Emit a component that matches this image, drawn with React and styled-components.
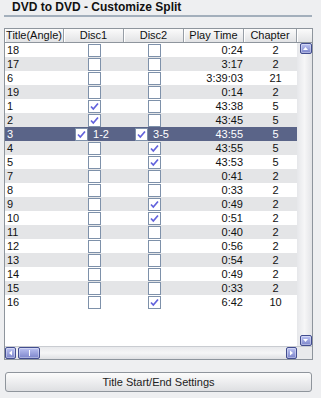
import React from 'react';
import styled, { createGlobalStyle } from 'styled-components';

const GlobalStyle = createGlobalStyle`
  body {
    margin: 0;
    background: #eeeff1;
    font-family: "Liberation Sans", Arial, sans-serif;
  }
`;

const Page = styled.div`
  width: 321px;
  height: 398px;
  background: #eeeff1;
  overflow: hidden;
`;

const Title = styled.div`
  margin: 0 9px 0 4px;
  padding-left: 8px;
  height: 15px;
  line-height: 15px;
  font-size: 12px;
  font-weight: bold;
  color: #111;
  border-bottom: 2px solid #a3afbc;
`;

const ListBox = styled.div`
  margin: 11px 0 0 4px;
  width: 307px;
  height: 330px;
  border: 1px solid #8e959d;
  display: grid;
  grid-template-columns: 292px 15px;
  grid-template-rows: 14px 303px 13px;
  background: #fff;
`;

const HeaderRow = styled.div`
  grid-column: 1 / 3;
  display: grid;
  grid-template-columns: 59px 60px 60px 60px 53px 15px;
  background: linear-gradient(#fbfbfb, #e2e3e5);
  border-bottom: 1px solid #8e959d;
`;

const HeaderCell = styled.div`
  font-size: 11px;
  line-height: 13px;
  color: #111;
  text-align: center;
  border-right: ${(p) => (p.$last ? 'none' : '1px solid #979ea6')};
  box-shadow: inset 1px 0 0 #ffffff;
  white-space: nowrap;
  overflow: hidden;
`;

const Body = styled.div`
  background: #fff;
  overflow: hidden;
`;

const Row = styled.div`
  display: grid;
  grid-template-columns: 59px 60px 60px 60px 53px;
  height: 14px;
  font-size: 11px;
  line-height: 14px;
  background: ${(p) => (p.$selected ? '#5a6488' : p.$odd ? '#e4e5e7' : '#ffffff')};
  color: ${(p) => (p.$selected ? '#ffffff' : '#111111')};
`;

const Cell = styled.div`
  display: flex;
  align-items: center;
  justify-content: ${(p) => p.$justify || 'flex-start'};
  padding: ${(p) => p.$pad || '0'};
  gap: 5px;
  white-space: nowrap;
`;

const Box = styled.span`
  width: 11px;
  height: 11px;
  border: 1px solid #7e91aa;
  background: #fff;
  display: inline-flex;
  align-items: center;
  justify-content: center;
  flex-shrink: 0;
`;

const VScroll = styled.div`
  display: flex;
  flex-direction: column;
  justify-content: space-between;
  align-items: center;
  background: linear-gradient(90deg, #e6e7ea, #f6f6f7 50%, #e3e4e7);
  padding: 0 0 0 1px;
`;

const HScroll = styled.div`
  display: flex;
  align-items: center;
  background: linear-gradient(#e8e9ec, #f6f6f7 50%, #dfe0e3);
  border-top: 1px solid #c9ccd1;
`;

const Corner = styled.div`
  background: #e9eaec;
  border-top: 1px solid #c9ccd1;
`;

const ScrollButton = styled.div`
  width: ${(p) => p.$w || 10}px;
  height: ${(p) => p.$h || 10}px;
  border: 1px solid #424d8f;
  border-radius: 2px;
  background: linear-gradient(#bcc3f2, #7c85cb);
  box-shadow: inset 0 0 0 1px rgba(255, 255, 255, 0.35);
  display: flex;
  align-items: center;
  justify-content: center;
  margin: ${(p) => p.$m || '0'};
  flex-shrink: 0;
`;

const Spacer = styled.div`
  flex: 1;
`;

const Footer = styled.button`
  display: block;
  margin: 12px 0 0 5px;
  width: 307px;
  height: 20px;
  border: 1px solid #8f959c;
  border-radius: 3px;
  background: linear-gradient(#fcfcfc, #dedfe2);
  font-family: "Liberation Sans", Arial, sans-serif;
  font-size: 11px;
  color: #222;
  padding: 0;
`;

const Check = () => (
  <svg width="9" height="9" viewBox="0 0 9 9">
    <path d="M1 4.5 L3.3 7 L8 1.5" fill="none" stroke="#6262dc" strokeWidth="1.7" />
  </svg>
);

const CheckBox = ({ checked }) => <Box>{checked && <Check />}</Box>;

const Arrow = ({ dir }) => {
  const paths = {
    up: 'M1 4 L3.5 1 L6 4 Z',
    down: 'M1 1 L3.5 4 L6 1 Z',
    left: 'M4 0.5 L1 3 L4 5.5 Z',
    right: 'M1 0.5 L4 3 L1 5.5 Z',
  };
  const vertical = dir === 'up' || dir === 'down';
  return (
    <svg width={vertical ? 7 : 5} height={vertical ? 5 : 6} viewBox={vertical ? '0 0 7 5' : '0 0 5 6'}>
      <path d={paths[dir]} fill="#ffffff" />
    </svg>
  );
};

const Grip = styled.span`
  width: 1px;
  height: 6px;
  background: #fff;
`;

const rows = [
  ['18', false, false, '0:24', '2'],
  ['17', false, false, '3:17', '2'],
  ['6', false, false, '3:39:03', '21'],
  ['19', false, false, '0:14', '2'],
  ['1', true, false, '43:38', '5'],
  ['2', true, false, '43:45', '5'],
  ['3', '1-2', '3-5', '43:55', '5'],
  ['4', false, true, '43:55', '5'],
  ['5', false, true, '43:53', '5'],
  ['7', false, false, '0:41', '2'],
  ['8', false, false, '0:33', '2'],
  ['9', false, true, '0:49', '2'],
  ['10', false, true, '0:51', '2'],
  ['11', false, false, '0:40', '2'],
  ['12', false, false, '0:56', '2'],
  ['13', false, false, '0:54', '2'],
  ['14', false, false, '0:49', '2'],
  ['15', false, false, '0:33', '2'],
  ['16', false, true, '6:42', '10'],
];

const DiscCell = ({ value }) => {
  if (typeof value === 'string') {
    return (
      <Cell $justify="center" $pad="0 4px 0 0">
        <CheckBox checked />
        <span>{value}</span>
      </Cell>
    );
  }
  return (
    <Cell $justify="center">
      <CheckBox checked={value} />
    </Cell>
  );
};

const App = () => (
  <Page>
    <GlobalStyle />
    <Title>DVD to DVD - Customize Split</Title>
    <ListBox>
      <HeaderRow>
        <HeaderCell>Title(Angle)</HeaderCell>
        <HeaderCell>Disc1</HeaderCell>
        <HeaderCell>Disc2</HeaderCell>
        <HeaderCell>Play Time</HeaderCell>
        <HeaderCell>Chapter</HeaderCell>
        <HeaderCell $last />
      </HeaderRow>
      <Body>
        {rows.map(([title, d1, d2, time, chapter], i) => (
          <Row key={title} $odd={i % 2 === 1} $selected={typeof d1 === 'string'}>
            <Cell $pad="0 0 0 2px">{title}</Cell>
            <DiscCell value={d1} />
            <DiscCell value={d2} />
            <Cell $justify="flex-end" $pad="0 1px 0 0">{time}</Cell>
            <Cell $justify="center" $pad="0 0 0 10px">{chapter}</Cell>
          </Row>
        ))}
      </Body>
      <VScroll>
        <ScrollButton $w={10} $h={9} $m="0 0 0 1px">
          <Arrow dir="up" />
        </ScrollButton>
        <ScrollButton $w={10} $h={9} $m="0 0 0 1px">
          <Arrow dir="down" />
        </ScrollButton>
      </VScroll>
      <HScroll>
        <ScrollButton $w={9} $h={10}>
          <Arrow dir="left" />
        </ScrollButton>
        <ScrollButton $w={20} $h={10} $m="0 0 0 2px">
          <Grip />
        </ScrollButton>
        <Spacer />
        <ScrollButton $w={9} $h={10}>
          <Arrow dir="right" />
        </ScrollButton>
      </HScroll>
      <Corner />
    </ListBox>
    <Footer>Title Start/End Settings</Footer>
  </Page>
);

export default App;
